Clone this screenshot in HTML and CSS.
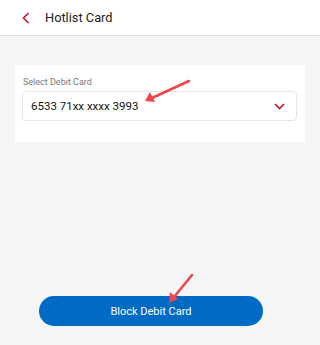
FILE: index.html
```html
<!DOCTYPE html>
<html>
<head>
<meta charset="utf-8">
<link rel="stylesheet" href="styles.css">
</head>
<body>
<div class="page">
  <header class="header">
    <svg class="back" width="8" height="12" viewBox="0 0 8 12"><path d="M6.5 1 L1.5 6 L6.5 11" fill="none" stroke="#c8102e" stroke-width="1.6"/></svg>
    <span class="title">Hotlist Card</span>
  </header>
  <main class="content">
    <section class="card">
      <div class="label">Select Debit Card</div>
      <div class="select">
        <span class="value">6533 71xx xxxx 3993</span>
        <svg class="chev" width="11" height="7" viewBox="0 0 11 7"><path d="M1 1 L5.5 5.5 L10 1" fill="none" stroke="#c8102e" stroke-width="1.6"/></svg>
      </div>
    </section>
    <button class="btn">Block Debit Card</button>
  </main>
  <svg class="arrows" width="320" height="345" viewBox="0 0 320 345">
    <g stroke="#f0444a" stroke-width="2.5" stroke-linecap="round" fill="none">
      <line x1="189" y1="81" x2="152" y2="98"/>
      <line x1="192" y1="275" x2="174" y2="297"/>
    </g>
    <g fill="#f0444a">
      <polygon points="145,101 150,92 155,102"/>
      <polygon points="169,303 170,292 178,299"/>
    </g>
  </svg>
</div>
</body>
</html>
```
FILE: styles.css
```css
html, body {
  margin: 0;
  padding: 0;
  background: #f5f5f5;
  font-family: Roboto, "Noto Sans", sans-serif;
}
.page {
  position: relative;
  width: 320px;
  height: 345px;
  overflow: hidden;
}
.header {
  height: 35px;
  background: #fff;
  border-bottom: 1px solid #dcdcdc;
  display: flex;
  align-items: center;
  box-sizing: content-box;
}
.back {
  margin-left: 22px;
}
.title {
  margin-left: 15px;
  font-size: 12.8px;
  color: #222;
}
.content {
  padding: 29px 15px 0 15px;
}
.card {
  background: #fff;
  height: 77px;
  box-sizing: border-box;
  padding: 10px 8px 0 7px;
}
.label {
  font-size: 9px;
  color: #7a7a7a;
  line-height: 14px;
  margin-left: 1px;
}
.select {
  margin-top: 2px;
  height: 30px;
  box-sizing: border-box;
  border: 1px solid #e6e6e6;
  border-radius: 4px;
  display: flex;
  align-items: center;
  justify-content: space-between;
  padding: 0 11px 0 8px;
}
.value {
  font-size: 11.5px;
  color: #111;
}
.btn {
  display: block;
  margin: 154px 0 0 24px;
  width: 224px;
  height: 30px;
  border: none;
  border-radius: 15px;
  background: #006bc4;
  color: #fff;
  font-family: Roboto, "Noto Sans", sans-serif;
  font-size: 11px;
  padding: 0;
}
.arrows {
  position: absolute;
  left: 0;
  top: 0;
  pointer-events: none;
}
```
